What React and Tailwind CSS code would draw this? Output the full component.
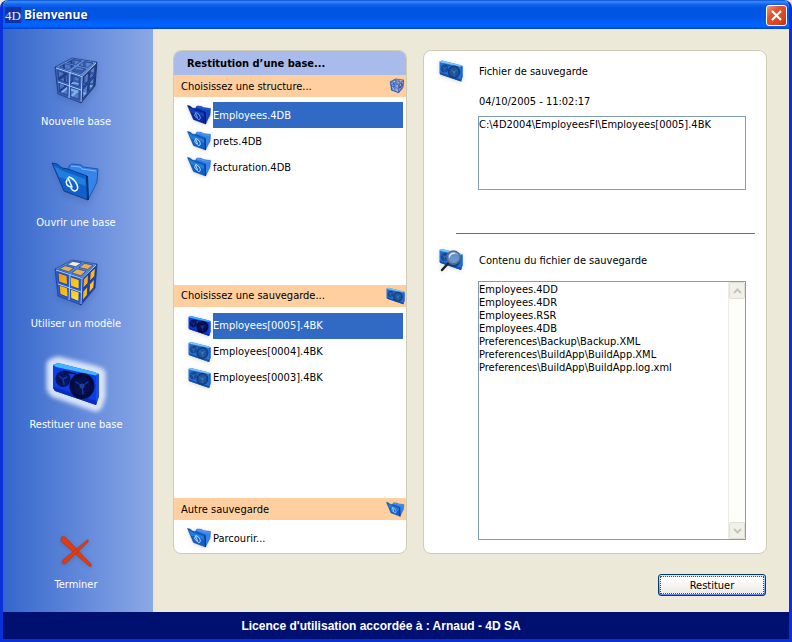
import React, { useState } from 'react';
import clsx from 'clsx';

// Cube corners on a 48x50 grid
const TL = [3, 11], TM = [20, 2], TR = [45, 6], FM = [30, 20];
const BL = [6, 38], FB = [29, 47], RB = [43, 30], BK = [21, 26];

const lerp = (a, b, t) => a + (b - a) * t;

// Point at (u, v) inside the quad a-b-c-d
const at = ([a, b, c, d], u, v) => {
  const x = lerp(lerp(a[0], b[0], u), lerp(d[0], c[0], u), v);
  const y = lerp(lerp(a[1], b[1], u), lerp(d[1], c[1], u), v);
  return `${x.toFixed(1)} ${y.toFixed(1)}`;
};

const quadPath = (q, u0 = 0, v0 = 0, u1 = 1, v1 = 1) =>
  `M${at(q, u0, v0)}L${at(q, u1, v0)}L${at(q, u1, v1)}L${at(q, u0, v1)}Z`;

const panes = [[0.1, 0.1, 0.44, 0.44], [0.56, 0.1, 0.9, 0.44], [0.1, 0.56, 0.44, 0.9], [0.56, 0.56, 0.9, 0.9]];

const framePath = (q) => quadPath(q) + panes.map(p => quadPath(q, ...p)).join('');

const faces = {
  top: [TL, TM, TR, FM],
  left: [TL, FM, FB, BL],
  right: [FM, TR, RB, FB],
  backLeft: [TL, TM, BK, BL],
  backRight: [TM, TR, RB, BK],
  bottom: [BL, BK, RB, FB],
};

function CubeIcon({ gold, bright, className }) {
  return (
    <svg viewBox="0 0 48 50" className={className} aria-hidden="true">
      <defs>
        <linearGradient id="cubeGold" x1="0" y1="0" x2="1" y2="1">
          <stop offset="0" stopColor="#e08a10" />
          <stop offset="0.6" stopColor="#ffc814" />
          <stop offset="1" stopColor="#ffe95a" />
        </linearGradient>
      </defs>
      {gold ? (
        <g fill="url(#cubeGold)">
          <path d={quadPath(faces.left)} />
          <path d={quadPath(faces.right)} />
          <path d={quadPath(faces.top)} fill="#e9ae55" />
          <path d={quadPath(faces.top, 0.56, 0.1, 0.9, 0.44)} fill="#f3ecd8" />
        </g>
      ) : (
        <g fillRule="evenodd">
          <path d={framePath(faces.backLeft)} fill={bright ? '#2c64d2' : '#213f88'} />
          <path d={framePath(faces.backRight)} fill={bright ? '#5b93ea' : '#345ba8'} />
          <path d={framePath(faces.bottom)} fill="#7fb0ee" />
        </g>
      )}
      <g fillRule="evenodd" strokeWidth="0.700" strokeLinejoin="round">
        <path d={framePath(faces.left)} fill={gold || bright ? '#245fd6' : '#3860b4'} stroke={gold ? '#0c2fae' : '#183482'} />
        <path d={framePath(faces.right)} fill={gold || bright ? '#1b49c4' : '#294d9e'} stroke={gold ? '#0a2390' : '#142a6c'} />
        <path d={framePath(faces.top)} fill={gold ? '#4f88d8' : '#5f89d4'} stroke={gold ? '#163f9e' : '#1f3e8a'} />
      </g>
      <path
        d="M4 12L30 20.500L29 46M30 20.500L44 7M18 16L17 42M6 26L29 34"
        fill="none" stroke="#a9cdf4" strokeWidth="1" strokeLinejoin="round"
      />
    </svg>
  );
}

function FolderIcon({ dark, className }) {
  return (
    <svg viewBox="0 0 50 44" className={className} aria-hidden="true">
      <path d="M17 12L18 6L21 4L30 5L32 7L47 9L46 22L37 40Z" fill={dark ? '#1347bd' : '#3484ea'} stroke={dark ? '#0a2c88' : '#1c56b4'} />
      <path d="M20 6L29 7L31 9L45 11" fill="none" stroke={dark ? '#3a74e0' : '#7ab8fc'} />
      <path d="M1 3L6 4L11 8L17 9L36 16L37 40L13 31Z" fill={dark ? '#0828a0' : '#0f60cc'} stroke={dark ? '#041768' : '#0b3c8c'} strokeLinejoin="round" />
      <path d="M3 6L12 11L34 19L35 26L8 17Z" fill={dark ? '#1c4fd0' : '#2c92e6'} opacity="0.6" />
      <path d="M36 16L37 40" stroke={dark ? '#030f4c' : '#083072'} strokeWidth="2" />
      <g fill="none" stroke={dark ? '#7fc4ff' : '#e8f7ff'} strokeWidth="1.600" strokeLinecap="round" strokeLinejoin="round">
        <path d="M16 20C14 23 16 27 21 27L17 18" />
        <path d="M18 17C25 19 30 30 24 31C22 31 21 30 20 28" />
      </g>
    </svg>
  );
}

function TapeShape({ dark }) {
  return (
    <g>
      <path d="M1 4L6 2L42 11L47 13V35L44 44L3 30L1 27Z" fill={dark ? '#0b3fe6' : '#2272d8'} />
      <path d="M1 4L6 2L42 11L47 13L46 15L4 6Z" fill={dark ? '#3fb4ff' : '#7ec4f4'} />
      <path d="M44 14L47 13V35L44 44Z" fill={dark ? '#1a4cf0' : '#1a62c8'} />
      <path d="M1 27L3 30L44 44L45 40L3 26Z" fill={dark ? '#0a2cc4' : '#1450a8'} />
      <ellipse cx="11" cy="18" rx="7.500" ry="8" fill={dark ? '#04145e' : '#174a98'} />
      <ellipse cx="30" cy="25" rx="12.500" ry="13" fill={dark ? '#020a3c' : '#123f86'} />
      <ellipse cx="30" cy="25" rx="9" ry="9.500" fill={dark ? '#06104e' : '#1f559a'} />
      <path d="M11 10L24 13" stroke={dark ? '#020a3c' : '#123f86'} strokeWidth="1.500" />
      <g stroke={dark ? '#15389c' : '#3a78b8'} strokeWidth="1.500" strokeLinecap="round">
        <path d="M11 18L7 15M11 18L15 16M11 18L12 23" />
        <path d="M30 25L24 21M30 25L36 21M30 25L31 33" />
      </g>
      <circle cx="30" cy="25" r="2.500" fill={dark ? '#1c409c' : '#3f78b4'} />
    </g>
  );
}

function TapeIcon({ dark, className }) {
  return (
    <svg viewBox="0 0 48 46" className={className} aria-hidden="true">
      <TapeShape dark={dark} />
    </svg>
  );
}

function GlowingTapeIcon({ className }) {
  return (
    <svg viewBox="-9 -9 66 64" className={className} aria-hidden="true">
      <defs>
        <filter id="tapeGlow" x="-30%" y="-30%" width="160%" height="160%">
          <feGaussianBlur stdDeviation="2" />
        </filter>
      </defs>
      <path
        d="M1 4L6 2L42 11L47 13V35L44 44L3 30L1 27Z"
        fill="#e6eefc" stroke="#e6eefc" strokeWidth="13" strokeLinejoin="round" filter="url(#tapeGlow)" opacity="0.9"
      />
      <TapeShape dark />
    </svg>
  );
}

function TapeSearchIcon({ className }) {
  return (
    <svg viewBox="0 0 48 50" className={className} aria-hidden="true">
      <TapeShape />
      <path d="M19 30L6 44" stroke="#222" strokeWidth="5" strokeLinecap="round" />
      <circle cx="29" cy="19" r="13" fill="#7aa4d4" fillOpacity="0.8" stroke="#5d6d80" strokeWidth="3" />
      <path d="M21 18C21 13 26 10 31 11" fill="none" stroke="#e4f0fb" strokeWidth="2.500" strokeLinecap="round" />
    </svg>
  );
}

function QuitIcon({ className }) {
  return (
    <svg viewBox="0 0 36 36" className={className} aria-hidden="true">
      <path d="M3 5C3 2 6 2 8 4L33 30C34 32 33 33 31 32L4 8C3 7 3 6 3 5Z" fill="#e43a0e" stroke="#a8321a" strokeWidth="0.600" />
      <path d="M28 7C30 5 31 6 30 8L8 29C5 31 3 29 5 26Z" fill="#e43a0e" stroke="#a8321a" strokeWidth="0.600" />
    </svg>
  );
}

function Arrow({ up }) {
  return (
    <svg viewBox="0 0 9 6" className="h-[6px] w-[9px]" aria-hidden="true">
      <path d={up ? 'M1 5L4.500 1.500L8 5' : 'M1 1L4.500 4.500L8 1'} fill="none" stroke="#c6c6b8" strokeWidth="2" />
    </svg>
  );
}

const navItems = [
  { id: 'new', label: 'Nouvelle base', icon: <CubeIcon className="h-[50px] w-12 drop-shadow-md" /> },
  { id: 'open', label: 'Ouvrir une base', icon: <FolderIcon className="h-11 w-[50px] drop-shadow-md" /> },
  { id: 'template', label: 'Utiliser un modèle', icon: <CubeIcon gold className="h-[50px] w-12 drop-shadow-md" /> },
  { id: 'restore', label: 'Restituer une base', icon: <GlowingTapeIcon className="h-16 w-[66px]" /> },
];

const structures = ['Employees.4DB', 'prets.4DB', 'facturation.4DB'];
const backups = ['Employees[0005].4BK', 'Employees[0004].4BK', 'Employees[0003].4BK'];

const backupFiles = [
  'Employees.4DD',
  'Employees.4DR',
  'Employees.RSR',
  'Employees.4DB',
  'Preferences\\Backup\\Backup.XML',
  'Preferences\\BuildApp\\BuildApp.XML',
  'Preferences\\BuildApp\\BuildApp.log.xml',
];

function SectionTitle({ children, icon }) {
  return (
    <h3 className="flex h-[22px] shrink-0 items-center justify-between bg-[#ffcf9f] pr-px pl-[7px]">
      {children}
      {icon}
    </h3>
  );
}

function FileRow({ name, icon: Icon, selected, onClick }) {
  return (
    <button type="button" onClick={onClick} className="flex h-[26px] w-full items-center pr-[3px] pl-[13px] text-left">
      <Icon dark={selected} className="h-[22px] w-[26px] shrink-0 pr-px drop-shadow-sm" />
      <span className={clsx('flex h-full flex-1 items-center', selected && 'bg-[#316ac5] text-white')}>{name}</span>
    </button>
  );
}

export default function App() {
  const [structure, setStructure] = useState(structures[0]);
  const [backup, setBackup] = useState(backups[0]);

  return (
    <div className="min-h-screen bg-[#ece9d8] font-['DejaVu_Sans_Condensed','DejaVu_Sans',sans-serif] text-[11px] leading-[13px] text-black">
      <div className="flex min-h-screen flex-col overflow-hidden rounded-t-lg border-x-3 border-b-3 border-[#0831d9] bg-[#ece9d8]">
        {/* Title bar */}
        <header className="-mx-[3px] flex h-[29px] shrink-0 items-center bg-[linear-gradient(180deg,#0a4fd0_0%,#3a8df8_6%,#1266f0_14%,#0055e0_28%,#0055e5_60%,#0066ff_84%,#0060f5_92%,#0040c8_100%)] pr-[5px] pl-[5px] pt-px">
          <span className="flex h-4 w-4 items-center justify-center bg-[#1234a0] font-['Liberation_Serif',serif] text-[13px] text-[#e4eaff]" aria-hidden="true">4D</span>
          <h1 className="ml-[3px] flex-1 font-['Open_Sans',sans-serif] text-xs font-bold text-white [text-shadow:1px_1px_1px_#0a1883]">Bienvenue</h1>
          <button
            type="button"
            aria-label="Fermer"
            className="flex h-[21px] w-[21px] items-center justify-center rounded-[3px] border border-white bg-[linear-gradient(135deg,#f09a80_0%,#e2532e_35%,#d8451c_75%,#b83010_100%)]"
          >
            <svg viewBox="0 0 11 11" className="h-[11px] w-[11px]" aria-hidden="true">
              <path d="M1 1L10 10M10 1L1 10" stroke="#fff" strokeWidth="2.200" />
            </svg>
          </button>
        </header>

        <div className="flex flex-1">
          {/* Sidebar */}
          <nav className="flex w-[150px] shrink-0 flex-col bg-linear-to-r from-[#3366cc] to-[#8ca8e6] pt-5 pr-1 pb-[21px] text-white">
            {navItems.map(item => (
              <button key={item.id} type="button" className="flex h-[101px] flex-col items-center">
                <span className="flex h-16 items-center justify-center">{item.icon}</span>
                <span className="mt-[2px]">{item.label}</span>
              </button>
            ))}
            <button type="button" className="mt-auto flex flex-col items-center">
              <QuitIcon className="h-9 w-9 drop-shadow-sm" />
              <span className="mt-2">Terminer</span>
            </button>
          </nav>

          <main className="flex flex-1 flex-col pt-[21px] pr-[22px] pb-4 pl-5">
            <div className="flex flex-1 gap-4">
              {/* Structure and backup lists */}
              <section className="flex w-[234px] shrink-0 flex-col overflow-hidden rounded-lg border border-[#cfccb6] bg-white">
                <h2 className="flex h-6 shrink-0 items-center bg-[#a8bbea] pl-[13px] font-bold">Restitution d’une base...</h2>
                <SectionTitle icon={<CubeIcon bright className="h-4 w-4" />}>Choisissez une structure...</SectionTitle>
                <div className="flex-[188] pt-[5px]">
                  {structures.map(name => (
                    <FileRow key={name} name={name} icon={FolderIcon} selected={name === structure} onClick={() => setStructure(name)} />
                  ))}
                </div>
                <SectionTitle icon={<TapeIcon className="h-[18px] w-[19px]" />}>Choisissez une sauvegarde...</SectionTitle>
                <div className="flex-[191] pt-[6px]">
                  {backups.map(name => (
                    <FileRow key={name} name={name} icon={TapeIcon} selected={name === backup} onClick={() => setBackup(name)} />
                  ))}
                </div>
                <SectionTitle icon={<FolderIcon className="h-[17px] w-[19px]" />}>Autre sauvegarde</SectionTitle>
                <div className="h-[33px] shrink-0 pt-[5px]">
                  <FileRow name="Parcourir..." icon={FolderIcon} />
                </div>
              </section>

              {/* Details of the chosen backup */}
              <section className="flex flex-1 flex-col rounded-lg border border-[#cfccb6] bg-white pt-2 pr-5 pb-[13px] pl-[15px]">
                <div className="flex items-center">
                  <TapeIcon className="h-6 w-6 drop-shadow-sm" />
                  <label htmlFor="backup-path" className="ml-4">Fichier de sauvegarde</label>
                </div>
                <p className="mt-3 ml-10">04/10/2005 - 11:02:17</p>
                <textarea
                  id="backup-path"
                  readOnly
                  value={`C:\\4D2004\\EmployeesFI\\${backup}`}
                  className="mt-2 ml-[39px] h-[74px] shrink-0 resize-none border border-[#7f9db9] pt-px outline-none"
                />
                <hr className="mt-[43px] -mr-[9px] ml-[17px] border-[#6e6e6e]" />
                <div className="mt-[14px] flex items-center">
                  <TapeSearchIcon className="h-[25px] w-6 drop-shadow-sm" />
                  <h2 className="ml-4">Contenu du fichier de sauvegarde</h2>
                </div>
                <div className="mt-2 ml-[39px] flex flex-1 border border-[#7f9db9]">
                  <ul className="flex-1 pt-px">
                    {backupFiles.map(file => <li key={file}>{file}</li>)}
                  </ul>
                  <div className="flex w-[17px] flex-col justify-between border-l border-[#eeede5] bg-[#fdfdf9]">
                    <button type="button" aria-label="Défiler vers le haut" className="flex h-[17px] items-center justify-center rounded-xs border border-[#e0dfd2] bg-[#f1f0ea]">
                      <Arrow up />
                    </button>
                    <button type="button" aria-label="Défiler vers le bas" className="flex h-[17px] items-center justify-center rounded-xs border border-[#e0dfd2] bg-[#f1f0ea]">
                      <Arrow />
                    </button>
                  </div>
                </div>
              </section>
            </div>

            <button
              type="button"
              className="mt-5 mr-px h-[22px] w-[108px] self-end rounded-[3px] border border-[#003c74] bg-linear-to-b from-[#cee7ff] to-[#6982ee] p-px"
            >
              <span className="flex h-full items-center justify-center border border-dotted border-[#5a4a30] bg-linear-to-b from-white to-[#ecebe5]">Restituer</span>
            </button>
          </main>
        </div>

        <footer className="flex h-[27px] shrink-0 items-center justify-center bg-[#001070] pr-[30px] font-['Liberation_Sans',Arial,sans-serif] text-xs font-bold text-white">
          Licence d'utilisation accordée à : Arnaud - 4D SA
        </footer>
      </div>
    </div>
  );
}
